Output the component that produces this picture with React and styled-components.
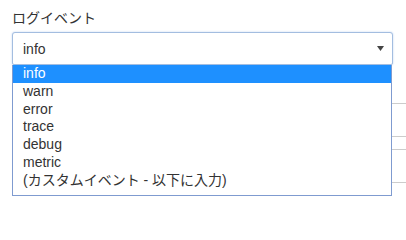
import React, { useState } from "react";
import styled, { createGlobalStyle } from "styled-components";

const GlobalStyle = createGlobalStyle`
  html, body {
    margin: 0;
    padding: 0;
    background: #fff;
  }
  body {
    font-family: "Liberation Sans", Arial, "Noto Sans CJK JP", sans-serif;
    color: #333;
  }
`;

const options = [
  "info",
  "warn",
  "error",
  "trace",
  "debug",
  "metric",
  "(カスタムイベント - 以下に入力)",
];

function App() {
  const [selected, setSelected] = useState(0);

  return (
    <Page>
      <GlobalStyle />
      <Form>
        <Label>ログイベント</Label>
        <SelectWrap>
          <SelectBox>
            <span>{options[selected]}</span>
            <svg width="7" height="5" viewBox="0 0 7 5">
              <polygon points="0,0 7,0 3.5,5" fill="#444" />
            </svg>
          </SelectBox>
          <OptionList>
            {options.map((opt, i) => (
              <Option
                key={opt}
                $active={i === selected}
                onClick={() => setSelected(i)}
              >
                {opt}
              </Option>
            ))}
          </OptionList>
        </SelectWrap>
        <HiddenField $top={38} />
        <HiddenField $top={12} />
      </Form>
    </Page>
  );
}

const Page = styled.div`
  width: 406px;
  height: 211px;
  overflow: hidden;
  position: relative;
`;

const Form = styled.div`
  padding: 8px 13px 0 12px;
  display: flex;
  flex-direction: column;
`;

const Label = styled.div`
  font-size: 14px;
  line-height: 20px;
  color: #333;
  margin-bottom: 4px;
`;

const SelectWrap = styled.div`
  position: relative;
  width: 381px;
`;

const SelectBox = styled.div`
  box-sizing: border-box;
  height: 33px;
  display: flex;
  align-items: center;
  justify-content: space-between;
  padding: 0 8px 0 10px;
  border: 1px solid #a3bde0;
  border-radius: 3px 3px 2px 2px;
  box-shadow: 0 0 2px rgba(102, 150, 220, 0.45);
  font-size: 14px;
  color: #333;
  background: #fff;
`;

const OptionList = styled.div`
  position: absolute;
  top: 33px;
  left: 0;
  width: 380px;
  box-sizing: border-box;
  border: 1px solid #7f9bd0;
  border-top: none;
  background: #fff;
  padding-bottom: 5px;
  z-index: 2;
`;

const Option = styled.div`
  height: 17.8px;
  line-height: 17.8px;
  padding-left: 10px;
  font-size: 14px;
  white-space: nowrap;
  cursor: default;
  color: ${(p) => (p.$active ? "#fff" : "#333")};
  background: ${(p) => (p.$active ? "#1e90ff" : "transparent")};
`;

const HiddenField = styled.div`
  margin-top: ${(p) => p.$top}px;
  width: 420px;
  height: 34px;
  box-sizing: border-box;
  border: 1px solid #ccc;
  border-radius: 3px;
`;

export default App;
